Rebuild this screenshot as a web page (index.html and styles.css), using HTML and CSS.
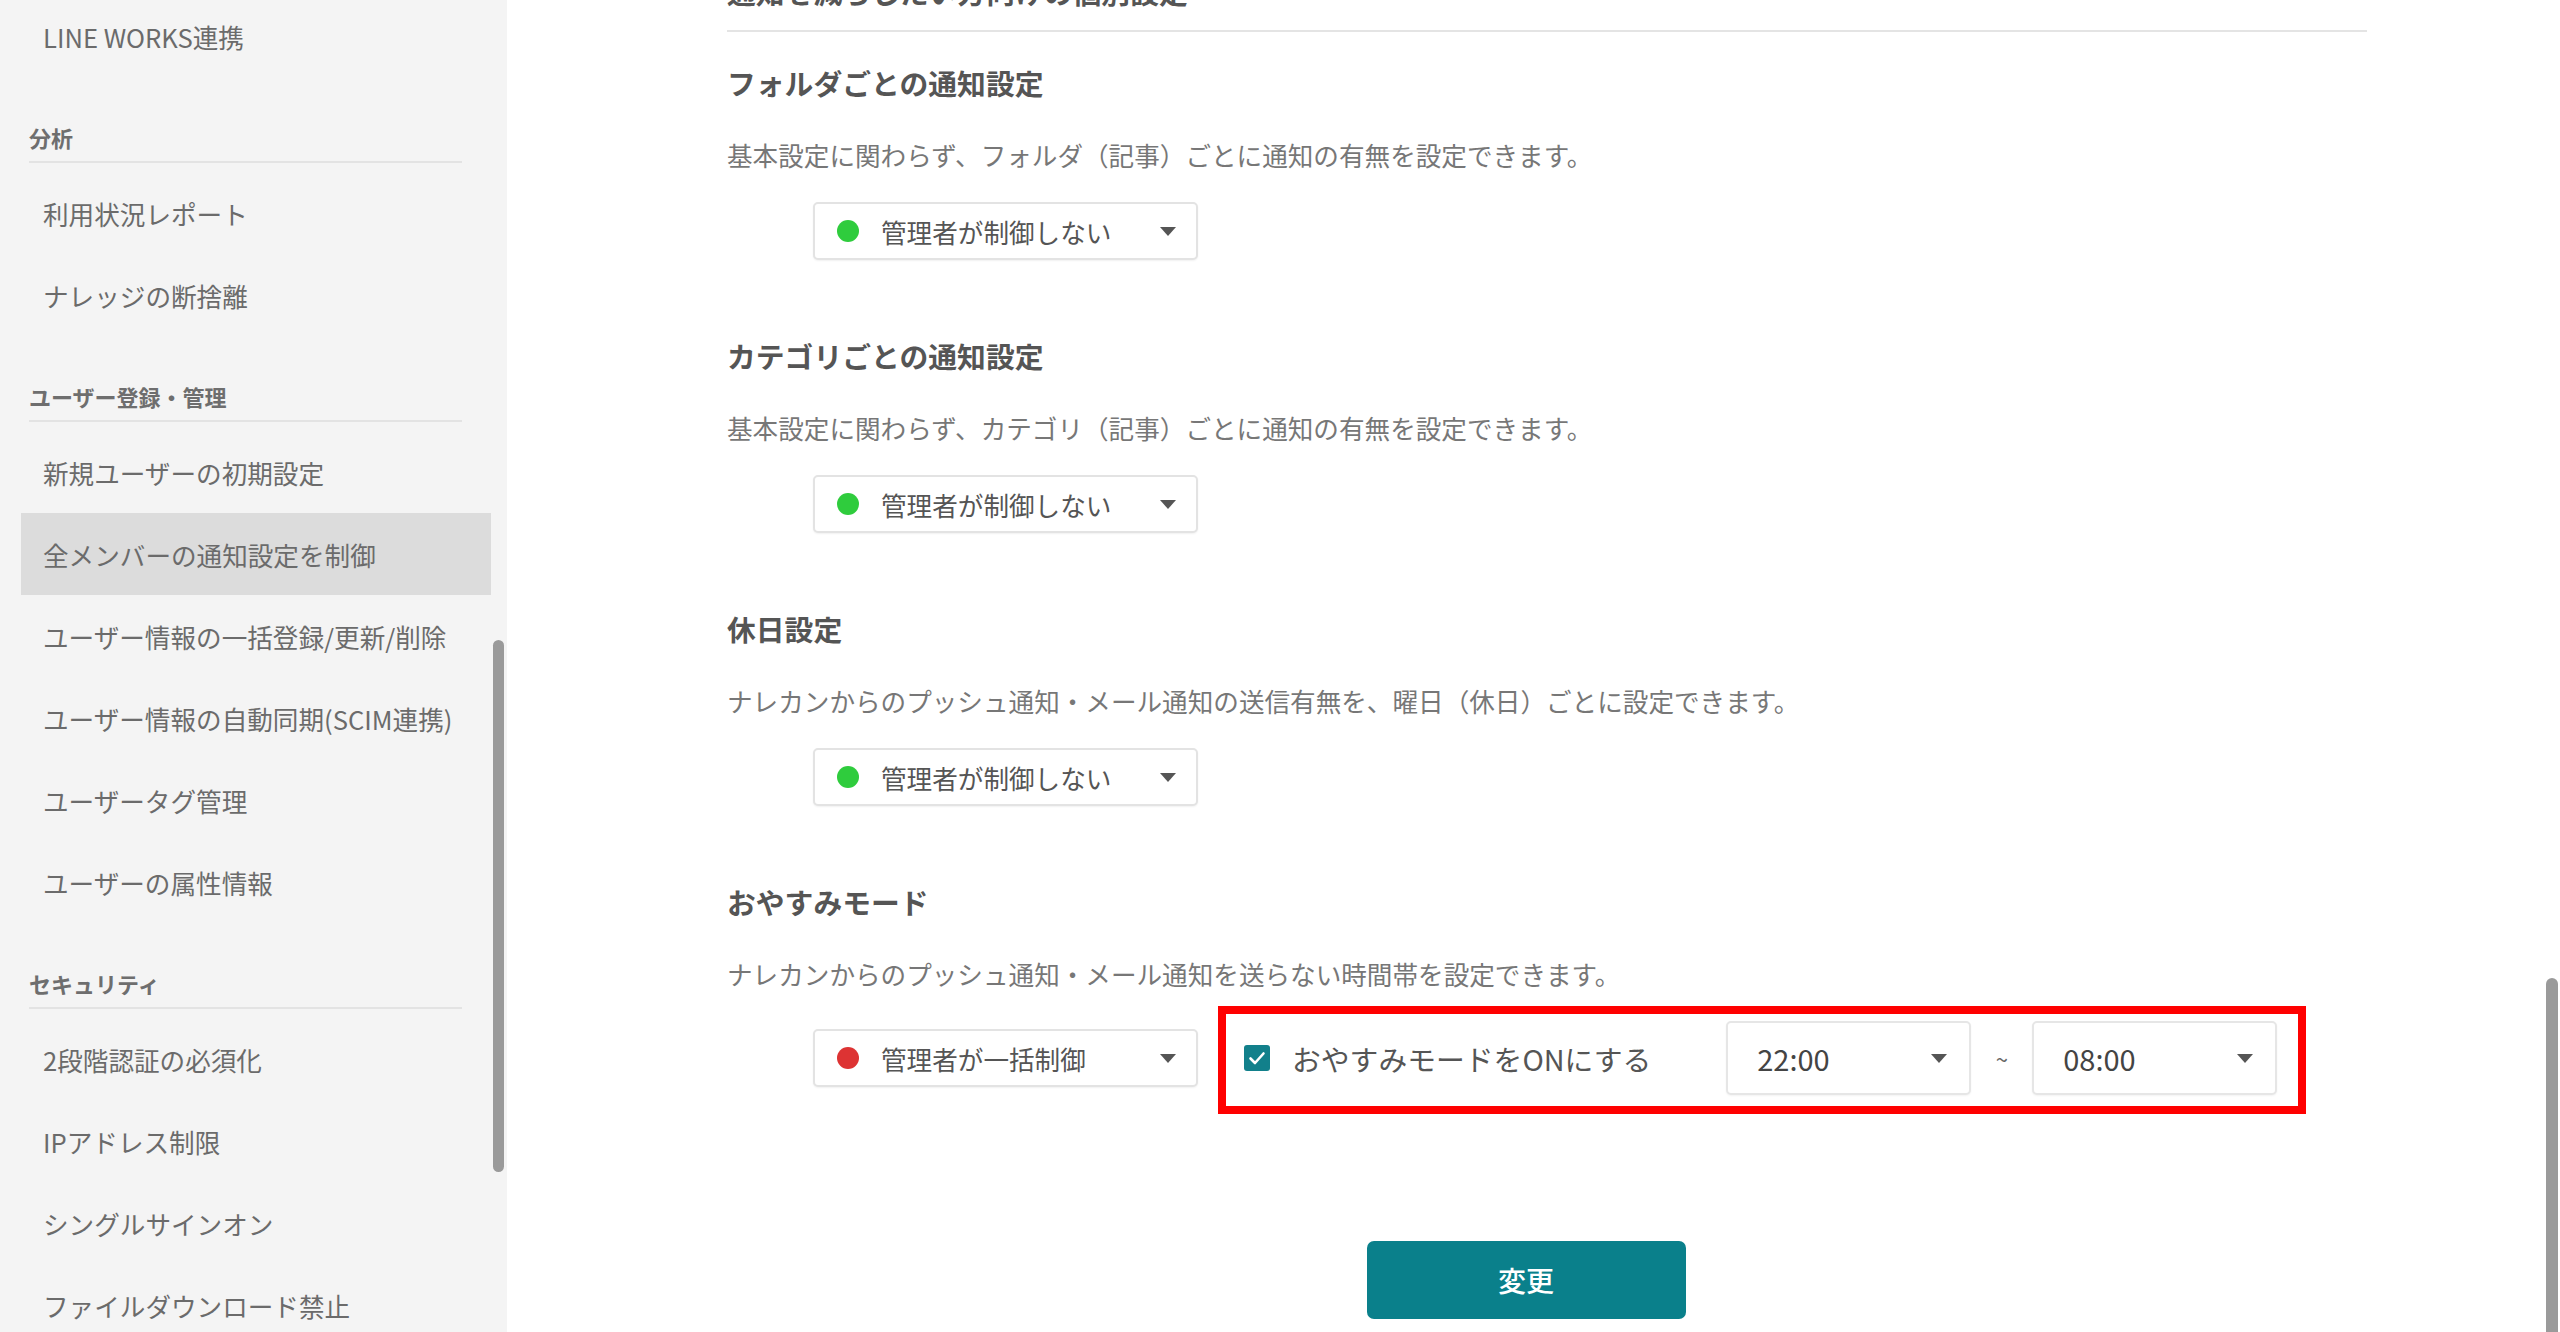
FILE: index.html
```html
<!DOCTYPE html>
<html lang="ja">
<head>
<meta charset="utf-8">
<title>全メンバーの通知設定を制御</title>
<link rel="stylesheet" href="styles.css">
</head>
<body>
<div class="page">
  <aside class="sidebar">
    <nav class="nav">
      <a class="nav-item">LINE WORKS連携</a>
      <div class="nav-head">分析</div>
      <a class="nav-item">利用状況レポート</a>
      <a class="nav-item">ナレッジの断捨離</a>
      <div class="nav-head">ユーザー登録・管理</div>
      <a class="nav-item">新規ユーザーの初期設定</a>
      <a class="nav-item active">全メンバーの通知設定を制御</a>
      <a class="nav-item">ユーザー情報の一括登録/更新/削除</a>
      <a class="nav-item">ユーザー情報の自動同期(SCIM連携)</a>
      <a class="nav-item">ユーザータグ管理</a>
      <a class="nav-item">ユーザーの属性情報</a>
      <div class="nav-head">セキュリティ</div>
      <a class="nav-item">2段階認証の必須化</a>
      <a class="nav-item">IPアドレス制限</a>
      <a class="nav-item">シングルサインオン</a>
      <a class="nav-item">ファイルダウンロード禁止</a>
    </nav>
    <div class="side-scroll"></div>
  </aside>

  <main class="main">
    <div class="content">
      <h2 class="top-heading">通知を減らしたい方向けの個別設定</h2>

      <section class="setting">
        <h3 class="setting-title">フォルダごとの通知設定</h3>
        <p class="setting-desc">基本設定に関わらず、フォルダ（記事）ごとに通知の有無を設定できます。</p>
        <div class="setting-row">
          <div class="select">
            <span class="dot green"></span>
            <span class="select-label">管理者が制御しない</span>
            <svg class="caret" viewBox="0 0 16 9"><path d="M0 0H16L8 9Z"/></svg>
          </div>
        </div>
      </section>

      <section class="setting">
        <h3 class="setting-title">カテゴリごとの通知設定</h3>
        <p class="setting-desc">基本設定に関わらず、カテゴリ（記事）ごとに通知の有無を設定できます。</p>
        <div class="setting-row">
          <div class="select">
            <span class="dot green"></span>
            <span class="select-label">管理者が制御しない</span>
            <svg class="caret" viewBox="0 0 16 9"><path d="M0 0H16L8 9Z"/></svg>
          </div>
        </div>
      </section>

      <section class="setting">
        <h3 class="setting-title">休日設定</h3>
        <p class="setting-desc">ナレカンからのプッシュ通知・メール通知の送信有無を、曜日（休日）ごとに設定できます。</p>
        <div class="setting-row">
          <div class="select">
            <span class="dot green"></span>
            <span class="select-label">管理者が制御しない</span>
            <svg class="caret" viewBox="0 0 16 9"><path d="M0 0H16L8 9Z"/></svg>
          </div>
        </div>
      </section>

      <section class="setting last">
        <h3 class="setting-title">おやすみモード</h3>
        <p class="setting-desc">ナレカンからのプッシュ通知・メール通知を送らない時間帯を設定できます。</p>
        <div class="setting-row">
          <div class="select">
            <span class="dot red"></span>
            <span class="select-label">管理者が一括制御</span>
            <svg class="caret" viewBox="0 0 16 9"><path d="M0 0H16L8 9Z"/></svg>
          </div>
          <div class="highlight">
            <span class="checkbox">
              <svg viewBox="0 0 26 26"><path d="M6.5 13.5L11 18L19.5 8.5" fill="none" stroke="#fff" stroke-width="2.6" stroke-linecap="round" stroke-linejoin="round"/></svg>
            </span>
            <span class="check-label">おやすみモードをONにする</span>
            <div class="time-select">
              <span class="time-value">22:00</span>
              <svg class="caret" viewBox="0 0 16 9"><path d="M0 0H16L8 9Z"/></svg>
            </div>
            <span class="tilde">~</span>
            <div class="time-select">
              <span class="time-value">08:00</span>
              <svg class="caret" viewBox="0 0 16 9"><path d="M0 0H16L8 9Z"/></svg>
            </div>
          </div>
        </div>
      </section>
    </div>

    <div class="actions">
      <button class="submit" type="button">変更</button>
    </div>
  </main>
  <div class="page-scroll"></div>
</div>
</body>
</html>
```

FILE: styles.css
```css
* {
  box-sizing: border-box;
}

html, body {
  margin: 0;
  padding: 0;
  height: 100%;
  overflow: hidden;
  background: #ffffff;
}

body {
  font-family: "Noto Sans CJK JP", "Noto Sans", sans-serif;
  color: #555555;
}

.page {
  display: flex;
  width: 2560px;
  height: 1332px;
  overflow: hidden;
  position: relative;
}

/* Sidebar */
.sidebar {
  position: relative;
  flex: 0 0 507px;
  height: 100%;
  background: #f4f4f4;
  overflow: hidden;
}

.nav {
  display: flex;
  flex-direction: column;
  margin-top: -5px;
}

.nav-item {
  display: flex;
  align-items: center;
  height: 82px;
  margin: 0 16px 0 21px;
  padding-left: 22px;
  font-size: 25.6px;
  color: #6b6b6b;
  white-space: nowrap;
  text-decoration: none;
}

.nav-item.active {
  background: #dcdcdc;
}

.nav-head {
  margin: 45px 45px 9px 29px;
  padding-bottom: 9px;
  line-height: 30px;
  font-size: 22px;
  font-weight: 700;
  color: #6e6e6e;
  border-bottom: 2px solid #e3e3e3;
}

.side-scroll {
  position: absolute;
  left: 493px;
  top: 640px;
  width: 11px;
  height: 532px;
  border-radius: 6px;
  background: #9a9a9a;
}

.page-scroll {
  position: absolute;
  left: 2546px;
  top: 978px;
  width: 12px;
  height: 380px;
  border-radius: 6px;
  background: #9a9a9a;
}

/* Main */
.main {
  flex: 1 1 auto;
  display: flex;
  flex-direction: column;
  padding-right: 15px;
}

.content {
  width: 1640px;
  margin-left: 220px;
}

.top-heading {
  margin: -28px 0 0 0;
  padding-bottom: 18px;
  line-height: 40px;
  font-size: 28.8px;
  font-weight: 700;
  color: #555555;
  white-space: nowrap;
  border-bottom: 2px solid #e4e4e4;
}

.setting {
  padding-top: 31px;
}

.setting + .setting {
  padding-top: 76px;
}

.setting-title {
  margin: 0;
  line-height: 40px;
  font-size: 28.8px;
  font-weight: 700;
  color: #555555;
  white-space: nowrap;
}

.setting-desc {
  margin: 34px 0 0 0;
  line-height: 36px;
  font-size: 25.6px;
  color: #777777;
  white-space: nowrap;
}

.setting-row {
  display: flex;
  align-items: center;
  margin-top: 29px;
  padding-left: 86px;
}

.select {
  display: flex;
  align-items: center;
  width: 385px;
  height: 58px;
  padding: 0 20px 0 22px;
  background: #ffffff;
  border: 2px solid #e3e3e3;
  border-radius: 5px;
  box-shadow: 0 1px 2px rgba(0, 0, 0, 0.06);
}

.dot {
  flex: 0 0 22px;
  width: 22px;
  height: 22px;
  border-radius: 50%;
}

.dot.green {
  background: #2fcc3d;
}

.dot.red {
  background: #dd3333;
}

.select-label {
  flex: 1 1 auto;
  margin-left: 22px;
  font-size: 25.6px;
  color: #555555;
  white-space: nowrap;
}

.caret {
  flex: 0 0 16px;
  width: 16px;
  height: 9px;
  fill: #555555;
}

/* Red annotation box */
.highlight {
  display: flex;
  align-items: center;
  margin: -15px 0 -19px 20px;
  padding: 7px 21px 11px 18px;
  border: 8px solid #ff0000;
}

.checkbox {
  display: flex;
  align-items: center;
  justify-content: center;
  width: 26px;
  height: 26px;
  border-radius: 3px;
  background: #12808b;
}

.checkbox svg {
  width: 26px;
  height: 26px;
}

.check-label {
  margin-left: 22px;
  font-size: 28.8px;
  color: #555555;
  white-space: nowrap;
}

.time-select {
  display: flex;
  align-items: center;
  justify-content: space-between;
  width: 245px;
  height: 74px;
  padding: 0 22px 0 29px;
  background: #ffffff;
  border: 2px solid #e6e6e6;
  border-radius: 5px;
  box-shadow: 0 1px 2px rgba(0, 0, 0, 0.05);
}

.check-label + .time-select {
  margin-left: 75px;
}

.time-value {
  font-size: 29px;
  color: #444444;
}

.tilde {
  width: 61px;
  text-align: center;
  font-size: 22px;
  color: #666666;
}

/* Actions */
.actions {
  display: flex;
  justify-content: center;
  margin-top: 146px;
}

.submit {
  width: 319px;
  height: 78px;
  border: none;
  border-radius: 7px;
  background: #0a808b;
  color: #ffffff;
  font-family: "Noto Sans CJK JP", "Noto Sans", sans-serif;
  font-size: 28px;
  font-weight: 500;
  cursor: pointer;
}
```
